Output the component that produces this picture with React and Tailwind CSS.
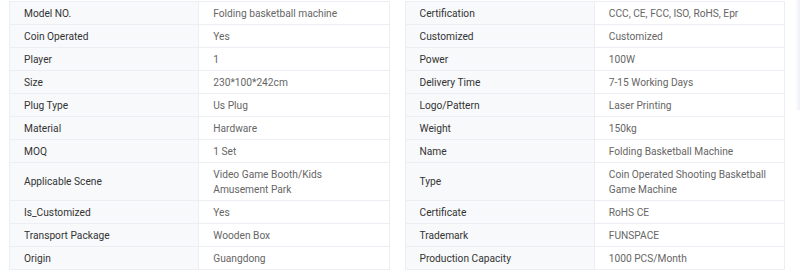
import React from 'react';

const leftRows = [
  ["Model NO.", "Folding basketball machine"],
  ["Coin Operated", "Yes"],
  ["Player", "1"],
  ["Size", "230*100*242cm"],
  ["Plug Type", "Us Plug"],
  ["Material", "Hardware"],
  ["MOQ", "1 Set"],
  ["Applicable Scene", "Video Game Booth/Kids Amusement Park"],
  ["Is_Customized", "Yes"],
  ["Transport Package", "Wooden Box"],
  ["Origin", "Guangdong"],
];

const rightRows = [
  ["Certification", "CCC, CE, FCC, ISO, RoHS, Epr"],
  ["Customized", "Customized"],
  ["Power", "100W"],
  ["Delivery Time", "7-15 Working Days"],
  ["Logo/Pattern", "Laser Printing"],
  ["Weight", "150kg"],
  ["Name", "Folding Basketball Machine"],
  ["Type", "Coin Operated Shooting Basketball Game Machine"],
  ["Certificate", "RoHS CE"],
  ["Trademark", "FUNSPACE"],
  ["Production Capacity", "1000 PCS/Month"],
];

// one spec table: label column tinted, value column white
const SpecTable = ({ rows }) => (
  <div className="border border-[#eceef3] border-b-0">
    {rows.map(([label, value]) => (
      <div key={label} className="grid grid-cols-2 border-b border-[#eceef3]">
        <div className="flex items-center bg-[#f8f9fb] border-r border-[#eceef3] px-[14px] py-[3.5px] text-[#333]">
          {label}
        </div>
        <div className="flex items-center pl-[14px] pr-[16px] py-[3.5px] text-[#666]">
          {value}
        </div>
      </div>
    ))}
  </div>
);

const App = () => {
  return (
    <div
      className="relative w-[800px] h-[279px] bg-white overflow-hidden text-[10.2px] leading-[15px]"
      style={{ fontFamily: 'Roboto, "Liberation Sans", sans-serif' }}
    >
      <div className="grid grid-cols-2 gap-[15px] pl-[9px] pt-[1px] w-[785px]">
        <SpecTable rows={leftRows} />
        <SpecTable rows={rightRows} />
      </div>
      {/* faint edge shadow on the right */}
      <div className="absolute right-0 top-0 w-[5px] h-[110px] bg-gradient-to-r from-white to-[#eef0f7]" />
    </div>
  );
};

export default App;
